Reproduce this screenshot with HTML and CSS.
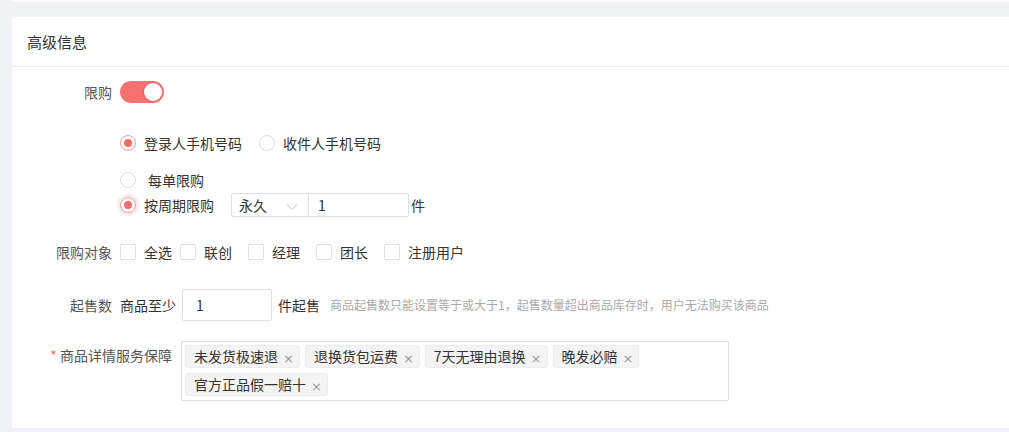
FILE: index.html
```html
<!DOCTYPE html>
<html lang="zh-CN">
<head>
<meta charset="utf-8">
<title>高级信息</title>
<link rel="stylesheet" href="styles.css">
</head>
<body>
<div class="prev-card"></div>
<section class="card">
  <header class="card-header">高级信息</header>
  <div class="card-body">
    <div class="form-item row-switch">
      <label class="label">限购</label>
      <div class="content">
        <span class="switch"><span class="knob"></span></span>
      </div>
    </div>

    <div class="form-item row-phone">
      <label class="label"></label>
      <div class="content">
        <span class="radio checked"></span><span class="opt">登录人手机号码</span>
        <span class="radio second"></span><span class="opt">收件人手机号码</span>
      </div>
    </div>

    <div class="form-item row-each">
      <label class="label"></label>
      <div class="content">
        <span class="radio"></span><span class="opt wide">每单限购</span>
      </div>
    </div>

    <div class="form-item row-cycle">
      <label class="label"></label>
      <div class="content">
        <span class="radio checked focus"></span><span class="opt">按周期限购</span>
        <span class="select">永久<svg class="chev" width="12" height="8" viewBox="0 0 12 8"><path d="M1 1.5 L6 6.5 L11 1.5" fill="none" stroke="#c0c4cc" stroke-width="1"/></svg></span>
        <span class="num-input">1</span>
        <span class="unit">件</span>
      </div>
    </div>

    <div class="form-item row-target">
      <label class="label">限购对象</label>
      <div class="content">
        <span class="checkbox"></span><span class="opt c1">全选</span>
        <span class="checkbox"></span><span class="opt c2">联创</span>
        <span class="checkbox"></span><span class="opt c2">经理</span>
        <span class="checkbox"></span><span class="opt c2">团长</span>
        <span class="checkbox"></span><span class="opt">注册用户</span>
      </div>
    </div>

    <div class="form-item row-min">
      <label class="label">起售数</label>
      <div class="content">
        <span class="txt">商品至少</span>
        <span class="min-input">1</span>
        <span class="txt">件起售</span>
        <span class="hint">商品起售数只能设置等于或大于1，起售数量超出商品库存时，用户无法购买该商品</span>
      </div>
    </div>

    <div class="form-item row-tags">
      <label class="label wide-label"><span class="star">*</span> 商品详情服务保障</label>
      <div class="content">
        <div class="tag-box">
          <span class="tag">未发货极速退<span class="x">×</span></span>
          <span class="tag">退换货包运费<span class="x">×</span></span>
          <span class="tag">7天无理由退换<span class="x">×</span></span>
          <span class="tag">晚发必赔<span class="x">×</span></span>
          <span class="tag">官方正品假一赔十<span class="x">×</span></span>
        </div>
      </div>
    </div>
  </div>
</section>
</body>
</html>
```

FILE: styles.css
```css
* { box-sizing: border-box; }
html, body { margin: 0; padding: 0; }
body {
  background: #f0f2f5;
  font-family: "Noto Sans CJK SC", "Noto Sans", sans-serif;
  font-size: 14px;
  color: #333;
  width: 1009px;
  height: 432px;
  overflow: hidden;
}
.prev-card {
  height: 2px;
  margin-left: 12px;
  background: #fff;
}
.card {
  margin-top: 15px;
  margin-left: 12px;
  background: #fff;
  height: 411px;
}
.card-header {
  height: 50px;
  line-height: 49px;
  padding-left: 15px;
  font-size: 15px;
  color: #333;
  border-bottom: 1px solid #ebebf3;
}
.card-body { padding-top: 0; }
.form-item {
  display: flex;
  align-items: center;
}
.label {
  width: 100px;
  flex: none;
  text-align: right;
  color: #555;
  font-size: 14px;
  line-height: 20px;
  white-space: nowrap;
}
.label.wide-label { width: 160px; }
.content {
  display: flex;
  align-items: center;
  margin-left: 8px;
  line-height: 20px;
}
.row-switch { margin-top: 14px; height: 22px; }
.row-phone { margin-top: 30px; height: 20px; }
.row-each { margin-top: 17px; height: 20px; }
.row-cycle { margin-top: 3px; height: 24px; }
.row-target { margin-top: 25px; height: 20px; }
.row-min { margin-top: 27px; height: 32px; }
.row-tags { margin-top: 20px; align-items: flex-start; }
.row-tags .label { margin-top: 4px; }

.switch {
  width: 44px;
  height: 22px;
  border-radius: 11px;
  background: #f87171;
  position: relative;
  display: inline-block;
}
.knob {
  position: absolute;
  right: 2px;
  top: 2px;
  width: 18px;
  height: 18px;
  border-radius: 50%;
  background: #fff;
  box-shadow: -1px 0 2px rgba(0,0,0,.15);
}

.radio {
  width: 16px;
  height: 16px;
  border-radius: 50%;
  border: 1px solid #dcdfe6;
  background: #fff;
  flex: none;
  position: relative;
}
.radio.checked { border-color: #f89a9a; }
.radio.checked::after {
  content: "";
  position: absolute;
  left: 3px;
  top: 3px;
  width: 8px;
  height: 8px;
  border-radius: 50%;
  background: #f56c6c;
}
.radio.focus { box-shadow: 0 0 0 3px rgba(245,108,108,.12); }
.radio.second { margin-left: 17px; }
.opt { margin-left: 8px; color: #333; white-space: nowrap; }
.opt.wide { margin-left: 12px; }

.select {
  margin-left: 17px;
  width: 78px;
  height: 24px;
  border: 1px solid #dcdfe6;
  border-radius: 2px 0 0 2px;
  padding-left: 7px;
  display: flex;
  align-items: center;
  position: relative;
  line-height: 22px;
}
.chev { position: absolute; right: 10px; top: 9px; }
.num-input {
  width: 100px;
  height: 24px;
  border: 1px solid #dcdfe6;
  border-left: none;
  border-radius: 0 2px 2px 0;
  padding-left: 9px;
  line-height: 22px;
  color: #333;
}
.unit { margin-left: 2px; }

.checkbox {
  width: 16px;
  height: 16px;
  border: 1px solid #dcdfe6;
  border-radius: 2px;
  flex: none;
  background: #fff;
}
.checkbox + .opt { margin-left: 8px; }
.opt.c1 { margin-right: 8px; }
.opt.c2 { margin-right: 16px; }

.txt { color: #333; white-space: nowrap; }
.min-input {
  margin: 0 6px;
  width: 90px;
  height: 32px;
  border: 1px solid #dcdfe6;
  border-radius: 2px;
  padding-left: 13px;
  line-height: 30px;
  color: #333;
}
.hint {
  margin-left: 10px;
  font-size: 12px;
  color: #aaa;
  white-space: nowrap;
}

.star { color: #f56c6c; }
.tag-box {
  margin-left: 1px;
  width: 548px;
  height: 60px;
  border: 1px solid #dcdfe6;
  border-radius: 2px;
  padding: 3px 3px 0 3px;
  display: flex;
  flex-wrap: wrap;
  align-content: flex-start;
  gap: 5px 5px;
}
.tag {
  height: 23px;
  background: #f4f4f5;
  border: 1px solid #ededf0;
  border-radius: 3px;
  padding: 0 5px 0 8px;
  display: inline-flex;
  align-items: center;
  color: #333;
  font-size: 14px;
  line-height: 21px;
  white-space: nowrap;
}
.x {
  margin-left: 5px;
  margin-top: 3px;
  color: #999;
  font-size: 13px;
  line-height: 13px;
  font-family: "DejaVu Sans", sans-serif;
}
```
